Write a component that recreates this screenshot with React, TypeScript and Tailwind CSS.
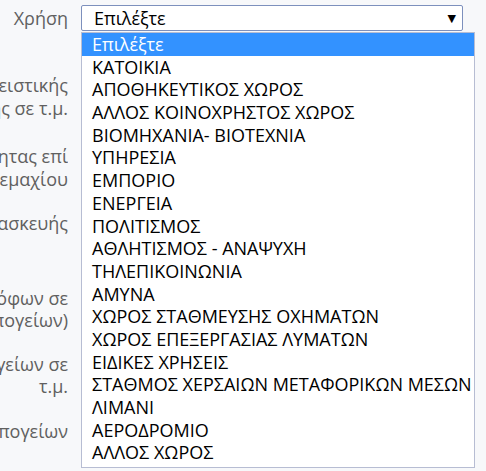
import React from "react";

const options = [
  "Επιλέξτε",
  "ΚΑΤΟΙΚΙΑ",
  "ΑΠΟΘΗΚΕΥΤΙΚΟΣ ΧΩΡΟΣ",
  "ΑΛΛΟΣ ΚΟΙΝΟΧΡΗΣΤΟΣ ΧΩΡΟΣ",
  "ΒΙΟΜΗΧΑΝΙΑ- ΒΙΟΤΕΧΝΙΑ",
  "ΥΠΗΡΕΣΙΑ",
  "ΕΜΠΟΡΙΟ",
  "ΕΝΕΡΓΕΙΑ",
  "ΠΟΛΙΤΙΣΜΟΣ",
  "ΑΘΛΗΤΙΣΜΟΣ - ΑΝΑΨΥΧΗ",
  "ΤΗΛΕΠΙΚΟΙΝΩΝΙΑ",
  "ΑΜΥΝΑ",
  "ΧΩΡΟΣ ΣΤΑΘΜΕΥΣΗΣ ΟΧΗΜΑΤΩΝ",
  "ΧΩΡΟΣ ΕΠΕΞΕΡΓΑΣΙΑΣ ΛΥΜΑΤΩΝ",
  "ΕΙΔΙΚΕΣ ΧΡΗΣΕΙΣ",
  "ΣΤΑΘΜΟΣ ΧΕΡΣΑΙΩΝ ΜΕΤΑΦΟΡΙΚΩΝ ΜΕΣΩΝ",
  "ΛΙΜΑΝΙ",
  "ΑΕΡΟΔΡΟΜΙΟ",
  "ΑΛΛΟΣ ΧΩΡΟΣ",
];

// label rows of the form, the inputs sit under the open list
const rows: { lines: string[]; mt: string }[] = [
  { lines: ["Επιφάνεια αποκλειστικής", "χρήσης σε τ.μ."], mt: "mt-[43px]" },
  { lines: ["Ποσοστό συγκυριότητας επί", "του γεωτεμαχίου"], mt: "mt-[26px]" },
  { lines: ["Έτος κατασκευής"], mt: "mt-[22px]" },
  { lines: ["Αριθμός ορόφων σε", "(χωρίς υπογείων)"], mt: "mt-[52px]" },
  { lines: ["Επιφάνεια υπογείων σε", "τ.μ."], mt: "mt-[21px]" },
  { lines: ["Αριθμός υπογείων"], mt: "mt-[22px]" },
];

const Label: React.FC<{ lines: string[] }> = ({ lines }) => (
  <div className="w-[68px] overflow-hidden flex flex-col items-end">
    {lines.map((l) => (
      <div key={l} className="whitespace-nowrap leading-[22.5px]">
        {l}
      </div>
    ))}
  </div>
);

export default function App() {
  return (
    <div
      className="relative w-[486px] h-[471px] overflow-hidden bg-[#f7f8fa] text-[18px] text-[#606060]"
      style={{ fontFamily: '"Open Sans", "DejaVu Sans", sans-serif' }}
    >
      <div className="pt-[5px]">
        {/* Χρήση + select */}
        <div className="flex items-center gap-[13px]">
          <div className="w-[68px] flex justify-end leading-[26px]">Χρήση</div>
          <div className="w-[382px] h-[26px] flex items-center justify-between bg-white border border-[#7d90bd] rounded-[2px] pl-[12px] pr-[6px] text-black">
            <span>Επιλέξτε</span>
            <span className="text-[11px]">▼</span>
          </div>
        </div>

        {rows.map((r) => (
          <div key={r.lines[0]} className={`flex ${r.mt}`}>
            <Label lines={r.lines} />
          </div>
        ))}
      </div>

      {/* open option list */}
      <div className="absolute left-[81px] top-[32px] w-[394px] h-[436px] bg-white border border-[#b7bdd3] text-black">
        {options.map((o, i) => (
          <div
            key={o}
            className={`h-[22.7px] leading-[22.7px] pl-[10px] whitespace-nowrap ${
              i === 0 ? "bg-[#3392ff] text-white" : ""
            }`}
          >
            {o}
          </div>
        ))}
      </div>
    </div>
  );
}
